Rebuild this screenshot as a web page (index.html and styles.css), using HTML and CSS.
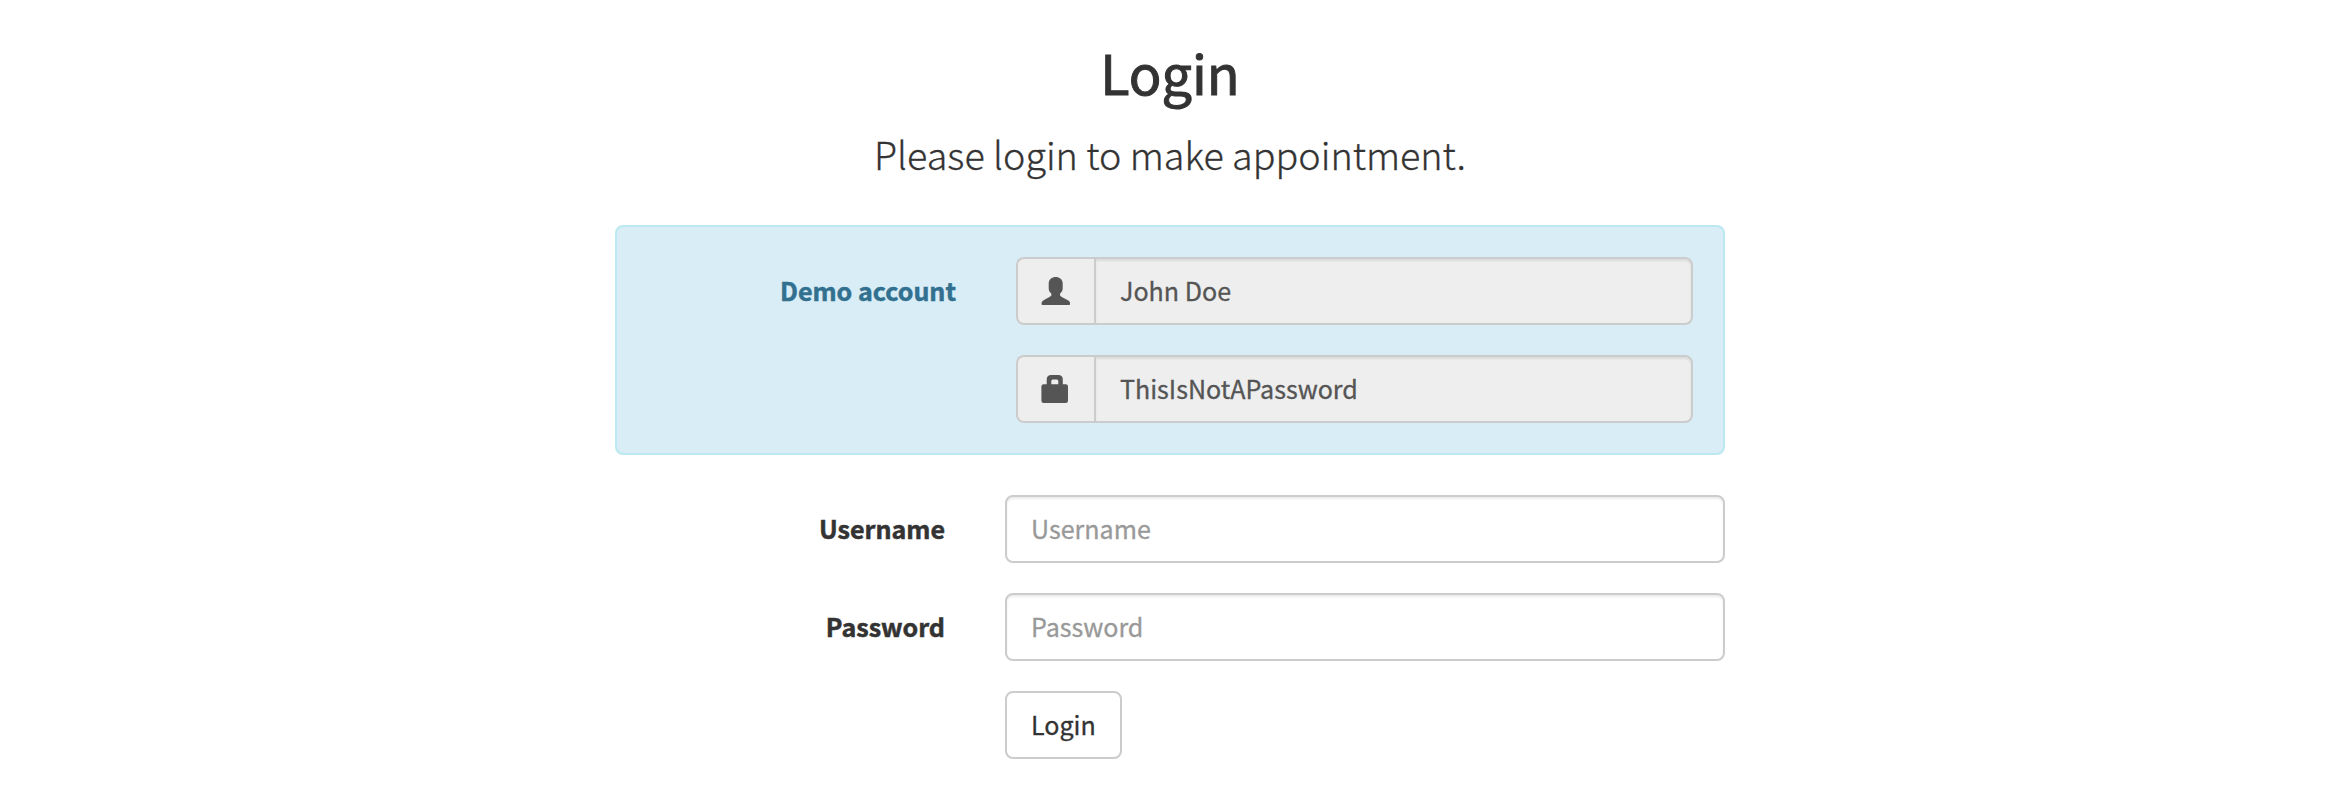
FILE: index.html
```html
<!DOCTYPE html>
<html lang="en">
<head>
<meta charset="utf-8">
<title>Login</title>
<link rel="stylesheet" href="styles.css">
</head>
<body>
<main class="container">
  <header class="heading">
    <h1 class="title">Login</h1>
    <p class="lead">Please login to make appointment.</p>
  </header>
  <form class="form">
    <div class="alert">
      <label class="label" for="demo-user">Demo account</label>
      <div class="stack">
        <div class="group">
          <span class="addon"><svg class="icon" viewBox="0 0 28 28"><path d="M13.700 0C17.400 0 20.700 2.200 20.700 6.500V11.300C20.700 14 19.500 15.300 18.100 16.500V18.700C20.300 20.600 25 22.400 26.700 23.700C27.700 24.500 28 25.300 28 26V27.300Q28 28 27.300 28H.3Q-.4 28-.4 27.300V26C-.4 25.300 0 24.500 1 23.700C3 22.200 7.200 20.500 9.300 18.700V16.500C7.900 15.300 6.700 14 6.700 11.300V6.500C6.700 2.200 10 0 13.700 0Z"/></svg></span>
          <input class="input joined" id="demo-user" type="text" value="John Doe" readonly>
        </div>
        <div class="group">
          <span class="addon"><svg class="icon" viewBox="0 0 28 28"><path fill-rule="evenodd" d="M4.700 9.300V4.500Q4.700 0 9.200 0H16.300Q20.800 0 20.800 4.500V9.300H23.800Q26 9.300 26 11.500V25.700Q26 28 23.800 28H1.700Q-.6 28-.6 25.700V11.500Q-.6 9.300 1.700 9.300ZM9.300 9.300H16.300V6Q16.300 4.500 14.800 4.500H10.800Q9.300 4.500 9.300 6Z"/></svg></span>
          <input class="input joined" type="text" value="ThisIsNotAPassword" readonly>
        </div>
      </div>
    </div>
    <div class="row">
      <label class="label" for="username">Username</label>
      <input class="input" id="username" type="text" placeholder="Username">
    </div>
    <div class="row">
      <label class="label" for="password">Password</label>
      <input class="input" id="password" type="password" placeholder="Password">
    </div>
    <div class="row">
      <button class="button" type="button">Login</button>
    </div>
  </form>
</main>
</body>
</html>
```
FILE: styles.css
```css
* { box-sizing: border-box; }
body {
  margin: 0;
  background: #fff;
  color: #333;
  font-family: "Noto Sans CJK SC", "Noto Sans", sans-serif;
  font-size: 25.07px;
  line-height: 40px;
  -webkit-text-stroke-width: .3px;
}
.container { width: 1110px; margin: 0 auto; padding-top: 37px; }
.heading { height: 188px; text-align: center; }
.title { margin: 0; font-size: 54px; font-weight: 400; line-height: 70px; -webkit-text-stroke-width: 1px; }
.lead { margin: 22px 0 0; font-size: 37.7px; font-weight: 300; line-height: 50px; }
.form { display: flex; flex-direction: column; gap: 30px; }
.alert {
  display: grid;
  grid-template-columns: 339px 1fr;
  column-gap: 30px;
  margin-bottom: 10px;
  padding: 30px;
  border: 2px solid #bce8f1;
  border-radius: 8px;
  background: #d9edf7;
  color: #31708f;
}
.stack { display: flex; flex-direction: column; gap: 30px; }
.group { display: flex; }
.row { display: grid; grid-template-columns: 330px 720px; column-gap: 60px; }
.label { height: 68px; line-height: 66px; text-align: right; font-weight: 700; -webkit-text-stroke-width: .5px; }
.alert .label { padding-right: 30px; }
.input {
  flex: 1;
  min-width: 0;
  height: 68px;
  padding: 0 24px 2px;
  border: 2px solid #ccc;
  border-radius: 8px;
  background: #fff;
  box-shadow: inset 0 2px 2px rgba(0, 0, 0, .075);
  color: #555;
  font: inherit;
  outline: none;
}
.input::placeholder { color: #999; opacity: 1; }
.joined { border-radius: 0 8px 8px 0; background: #eee; }
.addon {
  display: flex;
  align-items: center;
  width: 78px;
  height: 68px;
  padding: 0 24px 0;
  border: 2px solid #ccc;
  border-right: 0;
  border-radius: 8px 0 0 8px;
  background: #eee;
}
.icon { flex: none; width: 28px; height: 28px; overflow: visible; fill: #555; }
.button {
  grid-column: 2;
  justify-self: start;
  height: 68px;
  padding: 0 24px 2px;
  border: 2px solid #ccc;
  border-radius: 8px;
  background: #fff;
  color: #333;
  font: inherit;
}
```
